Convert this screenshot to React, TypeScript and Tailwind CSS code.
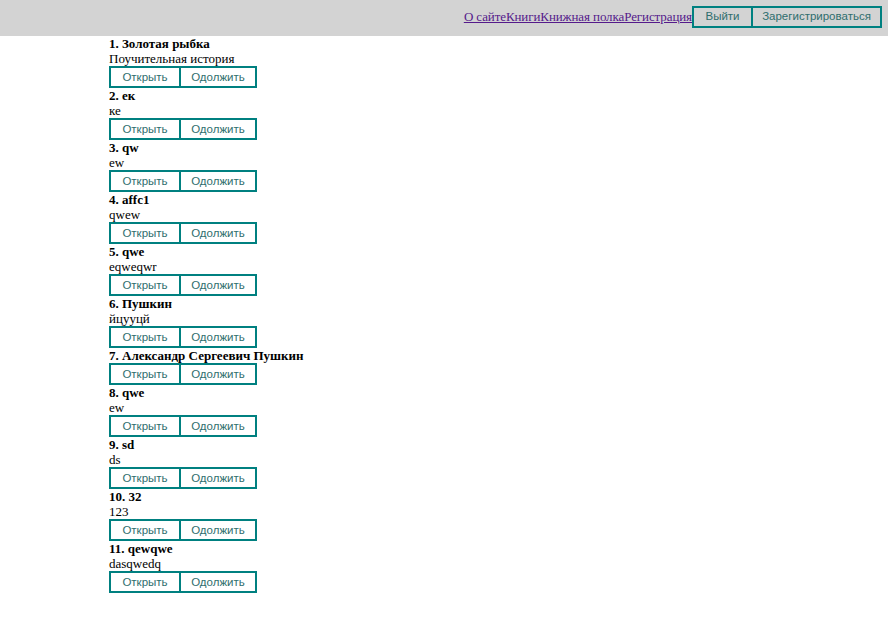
const books = [
  { title: 'Золотая рыбка', text: 'Поучительная история' },
  { title: 'ек', text: 'ке' },
  { title: 'qw', text: 'ew' },
  { title: 'affc1', text: 'qwew' },
  { title: 'qwe', text: 'eqweqwr' },
  { title: 'Пушкин', text: 'йцууцй' },
  { title: 'Александр Сергеевич Пушкин', text: '' },
  { title: 'qwe', text: 'ew' },
  { title: 'sd', text: 'ds' },
  { title: '32', text: '123' },
  { title: 'qewqwe', text: 'dasqwedq' },
];

const btn =
  "h-[22px] px-0 pt-[1px] border-2 border-[#008080] text-[#2f6e6e] text-[11.5px] leading-none font-['Liberation_Sans',Arial,sans-serif]";

export default function App() {
  return (
    <div className="min-h-screen bg-white font-['Liberation_Serif','Times_New_Roman',serif] text-[13px] leading-[15px] text-black">
      {/* header */}
      <header className="h-9 bg-[#d3d3d3] flex items-center justify-end pr-[6px] pb-[3px]">
        <nav className="flex text-[13px] tracking-[-0.1px] text-[#551a8b] underline">
          <a href="#">О сайте</a>
          <a href="#">Книги</a>
          <a href="#">Книжная полка</a>
          <a href="#">Регистрация</a>
        </nav>
        <div className="flex">
          <button className={btn + ' bg-[#d3d3d3] w-[61px]'}>Выйти</button>
          <button className={btn + ' bg-[#d3d3d3] -ml-[2px] w-[131px]'}>Зарегистрироваться</button>
        </div>
      </header>

      {/* list */}
      <main className="pl-[109px]">
        {books.map((b, i) => (
          <div key={i}>
            <div className="font-bold h-[15px]">
              {i + 1}. {b.title}
            </div>
            {b.text && <div className="h-[15px]">{b.text}</div>}
            <div className="flex">
              <button className={btn + ' bg-white w-[72px]'}>Открыть</button>
              <button className={btn + ' bg-white -ml-[2px] w-[78px]'}>Одолжить</button>
            </div>
          </div>
        ))}
      </main>
    </div>
  );
}
